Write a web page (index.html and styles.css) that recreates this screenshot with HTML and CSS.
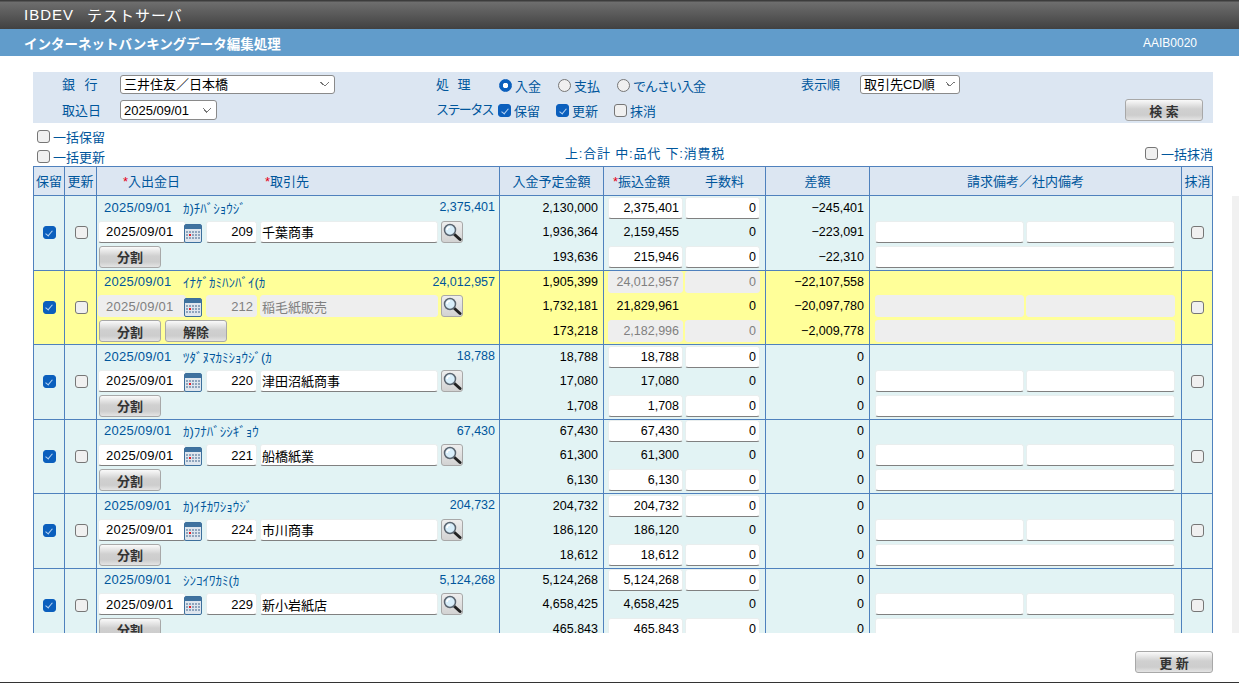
FILE: index.html
```html
<!DOCTYPE html>
<html lang="ja">
<head>
<meta charset="utf-8">
<title>インターネットバンキングデータ編集処理</title>
<link rel="stylesheet" href="styles.css">
</head>
<body>
<svg class="defs" width="0" height="0" aria-hidden="true">
  <symbol id="cal" viewBox="0 0 18 19">
    <rect x="0.5" y="0.5" width="17" height="18" rx="1.5" fill="#dfe6ee" stroke="#3d6f9c"/>
    <rect x="1" y="1" width="16" height="4" fill="#3f729f"/>
    <g fill="#8fa5bd">
      <rect x="2" y="7" width="2" height="2"/><rect x="5" y="7" width="2" height="2"/><rect x="8" y="7" width="2" height="2"/><rect x="11" y="7" width="2" height="2"/><rect x="14" y="7" width="2" height="2"/>
      <rect x="2" y="10" width="2" height="2"/><rect x="8" y="10" width="2" height="2"/><rect x="11" y="10" width="2" height="2"/><rect x="14" y="10" width="2" height="2"/>
      <rect x="2" y="13" width="2" height="2"/><rect x="5" y="13" width="2" height="2"/><rect x="8" y="13" width="2" height="2"/><rect x="11" y="13" width="2" height="2"/><rect x="14" y="13" width="2" height="2"/>
    </g>
    <rect x="5" y="10" width="2" height="2" fill="#e5202a"/>
  </symbol>
  <symbol id="lens" viewBox="0 0 20 20">
    <path d="M12.5 12.5 L18 17.5" stroke="#222" stroke-width="3" stroke-linecap="round"/>
    <circle cx="8" cy="8" r="5.5" fill="#d8eefa" stroke="#5a6570" stroke-width="1.5"/>
    <path d="M5 8 A3 3 0 0 1 8 5" fill="none" stroke="#fff" stroke-width="1.5"/>
  </symbol>
</svg>

<header class="titlebar"><span class="t-latin">IBDEV</span><span class="t-kana">テストサーバ</span></header>
<div class="subbar"><span class="sub-title">インターネットバンキングデータ編集処理</span><span class="sub-code">AAIB0020</span></div>

<form class="filter">
  <label class="flabel wide">銀 行</label>
  <div class="fcell"><select class="sel s-bank"><option>三井住友／日本橋</option></select></div>
  <label class="flabel wide2">処 理</label>
  <div class="opts r1">
    <label class="opt"><input type="radio" class="rd" name="k" checked>入金</label>
    <label class="opt"><input type="radio" class="rd" name="k">支払</label>
    <label class="opt"><input type="radio" class="rd" name="k"><span class="narrow">でんさい入金</span></label>
  </div>
  <label class="flabel">表示順</label>
  <div class="fcell"><select class="sel s-sort"><option>取引先CD順</option></select></div>

  <label class="flabel">取込日</label>
  <div class="fcell"><select class="sel s-date"><option>2025/09/01</option></select></div>
  <label class="flabel status">ステータス</label>
  <div class="opts r2">
    <label class="opt"><input type="checkbox" class="ck" checked>保留</label>
    <label class="opt"><input type="checkbox" class="ck" checked>更新</label>
    <label class="opt"><input type="checkbox" class="ck">抹消</label>
  </div>
  <div class="fbtn"><button type="button" class="btn big">検 索</button></div>
</form>

<div class="bulk">
  <div class="bulk-left">
    <label class="bl"><input type="checkbox" class="ck">一括保留</label>
    <label class="bl"><input type="checkbox" class="ck">一括更新</label>
  </div>
  <div class="bulk-mid">上:合計 中:品代 下:消費税</div>
  <label class="bl bulk-right"><input type="checkbox" class="ck">一括抹消</label>
</div>

<div class="thead">
  <div class="th">保留</div>
  <div class="th">更新</div>
  <div class="th th-party"><span class="h-date"><i>*</i>入出金日</span><span class="h-name"><i>*</i>取引先</span></div>
  <div class="th">入金予定金額</div>
  <div class="th th-pay"><span class="h-pay"><i>*</i>振込金額</span><span class="h-fee">手数料</span></div>
  <div class="th">差額</div>
  <div class="th">請求備考／社内備考</div>
  <div class="th">抹消</div>
</div>

<div class="scroll">
  <div class="rows">

    <div class="row">
      <div class="td mid"><input type="checkbox" class="ck" checked></div>
      <div class="td mid upd"><input type="checkbox" class="ck"></div>
      <div class="td lines party">
        <div class="l1"><span class="d">2025/09/01</span><span class="k">ｶ)ﾁﾊﾞｼｮｳｼﾞ</span><span class="a">2,375,401</span></div>
        <div class="l2"><input class="in i-date" value="2025/09/01"><svg class="cal"><use href="#cal"/></svg><input class="in i-code" value="209"><input class="in i-name" value="千葉商事"><button type="button" class="lens"><svg class="lens-i"><use href="#lens"/></svg></button></div>
        <div class="l3"><button type="button" class="btn">分割</button></div>
      </div>
      <div class="td lines num"><div>2,130,000</div><div>1,936,364</div><div>193,636</div></div>
      <div class="td lines pay">
        <div><input class="in i-num" value="2,375,401"><input class="in i-num" value="0"></div>
        <div><span class="plain">2,159,455</span><span class="plain">0</span></div>
        <div><input class="in i-num" value="215,946"><input class="in i-num" value="0"></div>
      </div>
      <div class="td lines num"><div>−245,401</div><div>−223,091</div><div>−22,310</div></div>
      <div class="td lines note"><div></div><div><input class="in i-note"><input class="in i-note"></div><div><input class="in i-wide"></div></div>
      <div class="td mid"><input type="checkbox" class="ck"></div>
    </div>

    <div class="row hold">
      <div class="td mid"><input type="checkbox" class="ck" checked></div>
      <div class="td mid upd"><input type="checkbox" class="ck"></div>
      <div class="td lines party">
        <div class="l1"><span class="d">2025/09/01</span><span class="k">ｲﾅｹﾞｶﾐﾊﾝﾊﾞｲ(ｶ</span><span class="a">24,012,957</span></div>
        <div class="l2"><input class="in i-date" value="2025/09/01" disabled><svg class="cal"><use href="#cal"/></svg><input class="in i-code" value="212" disabled><input class="in i-name" value="稲毛紙販売" disabled><button type="button" class="lens"><svg class="lens-i"><use href="#lens"/></svg></button></div>
        <div class="l3"><button type="button" class="btn">分割</button><button type="button" class="btn">解除</button></div>
      </div>
      <div class="td lines num"><div>1,905,399</div><div>1,732,181</div><div>173,218</div></div>
      <div class="td lines pay">
        <div><input class="in i-num" value="24,012,957" disabled><input class="in i-num" value="0" disabled></div>
        <div><span class="plain">21,829,961</span><span class="plain">0</span></div>
        <div><input class="in i-num" value="2,182,996" disabled><input class="in i-num" value="0" disabled></div>
      </div>
      <div class="td lines num"><div>−22,107,558</div><div>−20,097,780</div><div>−2,009,778</div></div>
      <div class="td lines note"><div></div><div><input class="in i-note" disabled><input class="in i-note" disabled></div><div><input class="in i-wide" disabled></div></div>
      <div class="td mid"><input type="checkbox" class="ck"></div>
    </div>

    <div class="row">
      <div class="td mid"><input type="checkbox" class="ck" checked></div>
      <div class="td mid upd"><input type="checkbox" class="ck"></div>
      <div class="td lines party">
        <div class="l1"><span class="d">2025/09/01</span><span class="k">ﾂﾀﾞﾇﾏｶﾐｼｮｳｼﾞ(ｶ</span><span class="a">18,788</span></div>
        <div class="l2"><input class="in i-date" value="2025/09/01"><svg class="cal"><use href="#cal"/></svg><input class="in i-code" value="220"><input class="in i-name" value="津田沼紙商事"><button type="button" class="lens"><svg class="lens-i"><use href="#lens"/></svg></button></div>
        <div class="l3"><button type="button" class="btn">分割</button></div>
      </div>
      <div class="td lines num"><div>18,788</div><div>17,080</div><div>1,708</div></div>
      <div class="td lines pay">
        <div><input class="in i-num" value="18,788"><input class="in i-num" value="0"></div>
        <div><span class="plain">17,080</span><span class="plain">0</span></div>
        <div><input class="in i-num" value="1,708"><input class="in i-num" value="0"></div>
      </div>
      <div class="td lines num"><div>0</div><div>0</div><div>0</div></div>
      <div class="td lines note"><div></div><div><input class="in i-note"><input class="in i-note"></div><div><input class="in i-wide"></div></div>
      <div class="td mid"><input type="checkbox" class="ck"></div>
    </div>

    <div class="row">
      <div class="td mid"><input type="checkbox" class="ck" checked></div>
      <div class="td mid upd"><input type="checkbox" class="ck"></div>
      <div class="td lines party">
        <div class="l1"><span class="d">2025/09/01</span><span class="k">ｶ)ﾌﾅﾊﾞｼｼｷﾞｮｳ</span><span class="a">67,430</span></div>
        <div class="l2"><input class="in i-date" value="2025/09/01"><svg class="cal"><use href="#cal"/></svg><input class="in i-code" value="221"><input class="in i-name" value="船橋紙業"><button type="button" class="lens"><svg class="lens-i"><use href="#lens"/></svg></button></div>
        <div class="l3"><button type="button" class="btn">分割</button></div>
      </div>
      <div class="td lines num"><div>67,430</div><div>61,300</div><div>6,130</div></div>
      <div class="td lines pay">
        <div><input class="in i-num" value="67,430"><input class="in i-num" value="0"></div>
        <div><span class="plain">61,300</span><span class="plain">0</span></div>
        <div><input class="in i-num" value="6,130"><input class="in i-num" value="0"></div>
      </div>
      <div class="td lines num"><div>0</div><div>0</div><div>0</div></div>
      <div class="td lines note"><div></div><div><input class="in i-note"><input class="in i-note"></div><div><input class="in i-wide"></div></div>
      <div class="td mid"><input type="checkbox" class="ck"></div>
    </div>

    <div class="row">
      <div class="td mid"><input type="checkbox" class="ck" checked></div>
      <div class="td mid upd"><input type="checkbox" class="ck"></div>
      <div class="td lines party">
        <div class="l1"><span class="d">2025/09/01</span><span class="k">ｶ)ｲﾁｶﾜｼｮｳｼﾞ</span><span class="a">204,732</span></div>
        <div class="l2"><input class="in i-date" value="2025/09/01"><svg class="cal"><use href="#cal"/></svg><input class="in i-code" value="224"><input class="in i-name" value="市川商事"><button type="button" class="lens"><svg class="lens-i"><use href="#lens"/></svg></button></div>
        <div class="l3"><button type="button" class="btn">分割</button></div>
      </div>
      <div class="td lines num"><div>204,732</div><div>186,120</div><div>18,612</div></div>
      <div class="td lines pay">
        <div><input class="in i-num" value="204,732"><input class="in i-num" value="0"></div>
        <div><span class="plain">186,120</span><span class="plain">0</span></div>
        <div><input class="in i-num" value="18,612"><input class="in i-num" value="0"></div>
      </div>
      <div class="td lines num"><div>0</div><div>0</div><div>0</div></div>
      <div class="td lines note"><div></div><div><input class="in i-note"><input class="in i-note"></div><div><input class="in i-wide"></div></div>
      <div class="td mid"><input type="checkbox" class="ck"></div>
    </div>

    <div class="row">
      <div class="td mid"><input type="checkbox" class="ck" checked></div>
      <div class="td mid upd"><input type="checkbox" class="ck"></div>
      <div class="td lines party">
        <div class="l1"><span class="d">2025/09/01</span><span class="k">ｼﾝｺｲﾜｶﾐ(ｶ</span><span class="a">5,124,268</span></div>
        <div class="l2"><input class="in i-date" value="2025/09/01"><svg class="cal"><use href="#cal"/></svg><input class="in i-code" value="229"><input class="in i-name" value="新小岩紙店"><button type="button" class="lens"><svg class="lens-i"><use href="#lens"/></svg></button></div>
        <div class="l3"><button type="button" class="btn">分割</button></div>
      </div>
      <div class="td lines num"><div>5,124,268</div><div>4,658,425</div><div>465,843</div></div>
      <div class="td lines pay">
        <div><input class="in i-num" value="5,124,268"><input class="in i-num" value="0"></div>
        <div><span class="plain">4,658,425</span><span class="plain">0</span></div>
        <div><input class="in i-num" value="465,843"><input class="in i-num" value="0"></div>
      </div>
      <div class="td lines num"><div>0</div><div>0</div><div>0</div></div>
      <div class="td lines note"><div></div><div><input class="in i-note"><input class="in i-note"></div><div><input class="in i-wide"></div></div>
      <div class="td mid"><input type="checkbox" class="ck"></div>
    </div>

  </div>
  <div class="track"></div>
</div>

<footer class="foot"><button type="button" class="btn big">更 新</button></footer>
</body>
</html>
```
FILE: styles.css
```css
* { box-sizing: border-box; }
html, body { margin: 0; height: 683px; overflow: hidden; background: #fff; }
body {
  display: flex; flex-direction: column;
  font-family: "Liberation Sans", "Noto Sans CJK JP", sans-serif;
  font-size: 13px; color: #000;
}
.defs { position: absolute; }

.titlebar {
  height: 29px; flex: none; display: flex; align-items: center; padding: 0 0 0 24px;
  background: linear-gradient(#3c3c3c 0, #3c3c3c 1px, #6e6e6e 2px, #414141 100%);
  color: #fff; font-size: 15px;
}
.t-latin { letter-spacing: 1px; width: 63px; }
.t-kana { letter-spacing: 1px; }

.subbar {
  height: 27px; flex: none; display: flex; align-items: center; justify-content: space-between;
  padding: 0 42px 0 24px; background: #619ccb; color: #fff;
}
.sub-title { font-size: 13.5px; font-weight: bold; }
.sub-code { font-size: 12px; }

.filter {
  flex: none; margin: 16px 26px 0 33px; height: 51px; background: #dce6f2; color: #00569c;
  display: grid; grid-template-columns: 87px 316px 62px 303px 59px 1fr; grid-template-rows: 25px 26px;
  align-items: center;
}
.flabel { white-space: nowrap; padding-bottom: 2px; }
.flabel.wide, .filter > .flabel:nth-child(7) { padding-left: 29px; }
.filter > .flabel.wide { word-spacing: 6px; }
.flabel.wide2 { word-spacing: 5px; }
.flabel.status { letter-spacing: -1.6px; padding-bottom: 4px; }
.fcell { display: flex; }
.sel {
  appearance: none; height: 19.5px; padding: 0 0 0 3px; font: inherit; font-size: 13px; color: #000;
  background-color: #fff;
  background-image: linear-gradient(45deg, transparent 50%, #777 50%, #777 62%, transparent 62%),
                    linear-gradient(-45deg, transparent 50%, #777 50%, #777 62%, transparent 62%);
  background-size: 5px 5px, 5px 5px;
  background-position: right 9px center, right 4px center;
  background-repeat: no-repeat;
  border: 1px solid #8a8a8a; border-radius: 3px;
}
.s-bank { width: 215px; }
.s-date { width: 97px; }
.s-sort { width: 100px; }
.opts { display: flex; align-items: center; height: 100%; padding-top: 1px; }
.opts .opt { display: flex; align-items: center; gap: 3px; white-space: nowrap; }
.r1 { padding-left: 1px; }
.r1 .opt { width: 59px; }
.r2 .opt { width: 58px; gap: 3px; }
.narrow { letter-spacing: -1px; }
.fbtn { grid-column: 6; display: flex; justify-content: flex-end; padding-right: 10px; }

.ck, .rd {
  appearance: none; margin: 0; flex: none; width: 13px; height: 13px; position: relative;
  background: #f0f0f0; border: 1px solid #767676;
}
.ck { border-radius: 3px; }
.rd { border-radius: 50%; }
.ck:checked { background: #0b5fbd; border-color: #0b5fbd; }
.ck:checked::after {
  content: ""; position: absolute; left: 3.5px; top: 1.5px; width: 3px; height: 6px;
  border: solid #b9d4f2; border-width: 0 1px 1px 0; transform: rotate(40deg);
}
.rd:checked { border-color: #0b5fbd; background: radial-gradient(circle, #fff 0 2.5px, #0b5fbd 3px); }

.bulk {
  flex: none; height: 43px; padding-left: 37px; padding-right: 26px; color: #00569c;
  display: grid; grid-template-columns: 528px 1fr auto; align-items: end;
}
.bulk-left { display: flex; flex-direction: column; }
.bl { display: flex; align-items: center; gap: 3px; height: 20px; line-height: 18px; padding-top: 3px; }
.bl .ck { margin-top: -3px; }
.bulk-mid { padding-bottom: 4px; letter-spacing: .8px; }
.bulk-right { height: 23px; padding-bottom: 3px; }

.thead, .row {
  display: grid; grid-template-columns: 31px 32px 403px 104px 162px 104px 312px 32px;
  width: 1180px;
}
.thead {
  flex: none; margin-left: 33px; height: 30px; background: #dce6f2; color: #00569c;
  border-top: 1px solid #4f81bd; border-bottom: 1px solid #4f81bd; border-right: 1px solid #4f81bd;
}
.th { border-left: 1px solid #4f81bd; display: flex; align-items: center; justify-content: center; white-space: nowrap; padding-bottom: 2px; }
.th i { color: #e60012; font-style: normal; }
.th-party, .th-pay { justify-content: flex-start; }
.h-date { margin-left: 26px; width: 142px; }
.h-pay { margin-left: 9px; width: 92px; }

.scroll { flex: none; height: 437px; overflow: hidden; display: flex; padding-left: 33px; }
.rows { width: 1180px; flex: none; }
.track { width: 7px; margin-left: 19px; background: #f1f1f1; }

.row {
  height: 74.5px; background: #e2f3f4; border-right: 1px solid #4f81bd;
  border-bottom: 1px solid #4f81bd;
}
.row.hold { background: #ffff99; }
.td { border-left: 1px solid #4f81bd; min-width: 0; }
.mid { display: flex; align-items: center; justify-content: center; }
.upd { padding-left: 1px; }
.lines { display: grid; grid-template-rows: 23px 25px 25.5px; }
.lines > div { display: flex; align-items: center; min-width: 0; }

.party { color: #00569c; }
.l1 { padding: 0 4px 1px 7px; font-size: 13px; white-space: nowrap; }
.d { width: 79px; letter-spacing: .25px; }
.a { margin-left: auto; font-size: 12.5px; }
.l2 { padding-left: 1px; }
.l3 { padding-left: 2px; gap: 4px; }

.in {
  height: 22px; padding: 0 3px; font: inherit; color: #000; background: #fff; outline: 0;
  border: 1px solid #e9eeee; border-bottom: 1px solid #808080; border-radius: 3px;
}
.in:disabled { background: #eee; color: #808080; border-color: #eee; opacity: 1; }
.i-date { width: 88px; padding-left: 7px; font-size: 13px; letter-spacing: .25px; }
.cal { width: 18px; height: 19px; margin: 3px 0 0 -2px; flex: none; }
.i-code { width: 51px; margin-left: 4px; text-align: right; font-size: 13px; }
.i-name { width: 178px; margin-left: 3px; padding-left: 1px; font-size: 13px; }
.lens {
  width: 22px; height: 22px; margin-left: 3px; padding: 0; display: flex; align-items: center; justify-content: center;
  background: linear-gradient(#eee, #d2d2d2); border: 1px solid #a8a8a8; border-radius: 3px;
}
.lens-i { width: 20px; height: 20px; }

.btn {
  width: 62px; height: 22px; padding: 0; font: inherit; font-weight: bold; font-size: 13px; color: #333;
  border: 1px solid #a8a8a8; border-radius: 3px;
  background: linear-gradient(#fafafa 0, #d0d0d0 45%, #cdcdcd 75%, #e4e4e4 100%);
}
.btn.big { width: 78px; }

.num > div { justify-content: flex-end; padding-right: 5px; font-size: 12.5px; }
.pay { padding-left: 4px; font-size: 12.5px; }
.pay > div { gap: 2px; }
.i-num { width: 75px; text-align: right; font-size: 12.5px; }
.plain { width: 75px; text-align: right; padding-right: 4px; }
.note { padding-left: 5px; }
.note > div { gap: 2px; }
.i-note { width: 149px; }
.i-wide { width: 300px; }

.foot {
  flex: 1; display: flex; justify-content: flex-end; align-items: flex-start;
  padding: 18px 26px 0 0; border-bottom: 1px solid #333;
}
```
